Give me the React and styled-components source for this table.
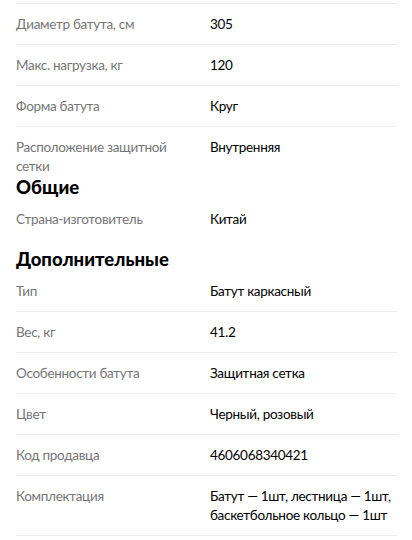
import React from 'react';
import styled, { createGlobalStyle } from 'styled-components';

const GlobalStyle = createGlobalStyle`
	html, body {
		margin: 0;
		padding: 0;
		background: #fff;
	}
	body {
		font-family: 'Lato', 'Noto Sans', sans-serif;
		-webkit-font-smoothing: antialiased;
	}
`;

const Page = styled.div`
	width: 412px;
	height: 540px;
	overflow: hidden;
	padding: 3px 15px 0 16px;
	box-sizing: border-box;
`;

const Section = styled.section`
	& + & {
		margin-top: 8px;
	}
`;

const Title = styled.h2`
	margin: 0;
	font-size: 18.5px;
	line-height: 24px;
	font-weight: 900;
	color: #000;
`;

const List = styled.div`
	border-bottom: ${props => (props.$closed ? '1px solid #ececec' : 'none')};
`;

const Row = styled.div`
	display: grid;
	grid-template-columns: 194px 1fr;
	padding: 11px 0 10px;
	border-top: ${props => (props.$plain ? 'none' : '1px solid #ececec')};
	font-size: 13.5px;
	line-height: 19px;
	letter-spacing: -0.3px;
`;

const Label = styled.div`
	height: 19px;
	padding-right: 16px;
	color: #757575;
`;

const Value = styled.div`
	color: #000;
`;

const sections = [
	{
		rows: [
			['Диаметр батута, см', '305'],
			['Макс. нагрузка, кг', '120'],
			['Форма батута', 'Круг'],
			['Расположение защитной сетки', 'Внутренняя'],
		],
	},
	{
		title: 'Общие',
		rows: [['Страна-изготовитель', 'Китай']],
	},
	{
		title: 'Дополнительные',
		closed: true,
		rows: [
			['Тип', 'Батут каркасный'],
			['Вес, кг', '41.2'],
			['Особенности батута', 'Защитная сетка'],
			['Цвет', 'Черный, розовый'],
			['Код продавца', '4606068340421'],
			['Комплектация', 'Батут — 1шт, лестница — 1шт, баскетбольное кольцо — 1шт'],
		],
	},
];

const App = () => (
	<>
		<GlobalStyle />
		<Page>
			{sections.map((section, i) => (
				<Section key={i}>
					{section.title && <Title>{section.title}</Title>}
					<List $closed={section.closed}>
						{section.rows.map(([label, value], j) => (
							<Row key={label} $plain={section.title && j === 0}>
								<Label>{label}</Label>
								<Value>{value}</Value>
							</Row>
						))}
					</List>
				</Section>
			))}
		</Page>
	</>
);

export default App;
